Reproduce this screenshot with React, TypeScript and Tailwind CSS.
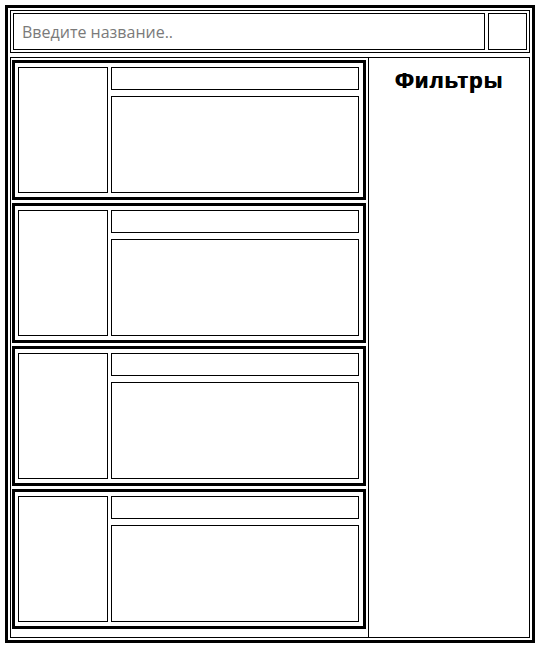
import React from 'react';

// Placeholder product cards (picture + title + description boxes)
function ItemCard() {
    return (
        <div className="h-[140px] border-[3px] border-black pt-[4px] pb-[4px] pl-[3px] pr-[4px] flex gap-[3px] shrink-0">
            <div className="w-[90px] h-[126px] border border-black"></div>
            <div className="flex-1 flex flex-col gap-[6px]">
                <div className="h-[23px] border border-black"></div>
                <div className="flex-1 border border-black"></div>
            </div>
        </div>
    );
}

export default function App() {
    const items = [1, 2, 3, 4];

    return (
        <div className="w-[541px] h-[648px] bg-white pt-[5px] pl-[5px]">
            <div className="w-[530px] h-[638px] border-[3px] border-black p-[2px] flex flex-col gap-[4px]">
                {/* Search bar */}
                <div className="border border-black p-[2px] flex gap-[3px] shrink-0">
                    <input
                        type="text"
                        placeholder="Введите название.."
                        className="flex-1 h-[37px] border border-black px-[8px] text-[16px] outline-none placeholder:text-[#7a7a7a]"
                        style={{ fontFamily: '"Open Sans", "Noto Sans", sans-serif' }}
                    />
                    <button className="w-[39px] h-[37px] border border-black bg-white"></button>
                </div>

                {/* Content */}
                <div className="flex-1 border border-black flex min-h-0">
                    <div className="flex-1 pt-[2px] pl-[1px] pr-[2px] flex flex-col gap-[3px]">
                        {items.map((i) => (
                            <ItemCard key={i} />
                        ))}
                    </div>
                    <div className="w-[161px] border-l border-black pt-[6px] text-center">
                        <h2
                            className="text-[22px] font-bold text-black tracking-[1.1px] [text-shadow:0.7px_0_0_#000]"
                            style={{ fontFamily: '"Liberation Sans", Arial, sans-serif' }}
                        >
                            Фильтры
                        </h2>
                    </div>
                </div>
            </div>
        </div>
    );
}
